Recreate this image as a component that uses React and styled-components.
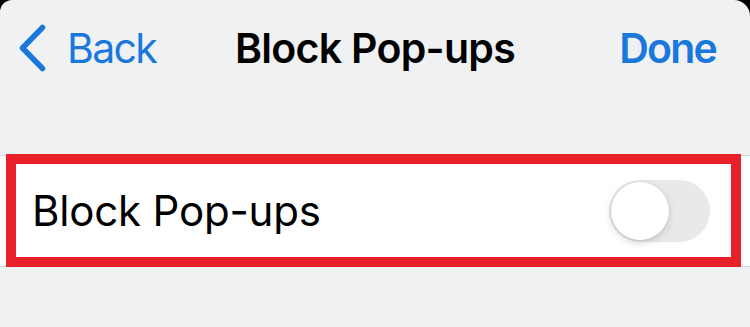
import styled, { createGlobalStyle } from "styled-components";

const GlobalStyle = createGlobalStyle`
  html, body {
    margin: 0;
    padding: 0;
    background: #000;
  }
  body {
    font-family: Inter, "Noto Sans", "Liberation Sans", sans-serif;
    -webkit-font-smoothing: antialiased;
  }
`;

const StyledSheet = styled.div`
  display: flex;
  flex-direction: column;
  height: 327px;
  background: #eff1f3;
  border-top-left-radius: 12px;
  border-top-right-radius: 16px;
  overflow: hidden;
`;

const StyledHeader = styled.header`
  display: grid;
  grid-template-columns: 1fr auto 1fr;
  align-items: center;
  height: 96px;
  padding: 0 19px;
`;

const StyledBack = styled.button`
  display: flex;
  align-items: center;
  gap: 21px;
  justify-self: start;
  padding: 0;
  border: 0;
  background: none;
  color: #1a78dc;
  font: 400 41px/1 Inter, "Noto Sans", sans-serif;
  letter-spacing: -1.7px;
`;

const StyledTitle = styled.h1`
  margin: 0;
  color: #000;
  font: 600 41px/1 Inter, "Noto Sans", sans-serif;
  letter-spacing: -0.7px;
`;

const StyledDone = styled.button`
  justify-self: end;
  margin-right: 15px;
  padding: 0;
  border: 0;
  background: none;
  color: #1a78dc;
  font: 600 41px/1 Inter, "Noto Sans", sans-serif;
  letter-spacing: -1.8px;
`;

const StyledRow = styled.div`
  display: flex;
  height: 110px;
  margin-top: 59px;
  padding: 0 9px 0 6px;
  background: #fff;
  border-top: 1px solid #d4d6d9;
  border-bottom: 1px solid #d4d6d9;
`;

const StyledHighlight = styled.div`
  flex: 1;
  display: flex;
  align-items: center;
  justify-content: space-between;
  box-sizing: border-box;
  margin: -2px 0 -1px;
  padding: 0 21px 0 16px;
  border: 10px solid #e8202a;
`;

const StyledLabel = styled.span`
  color: #000;
  font: 400 42px/1 Inter, "Noto Sans", sans-serif;
  letter-spacing: -0.2px;
`;

const StyledSwitch = styled.div`
  position: relative;
  width: 101px;
  height: 62px;
  border-radius: 31px;
  background: #e9e9eb;
`;

const StyledKnob = styled.span`
  position: absolute;
  top: 2px;
  left: ${({ $on }) => ($on ? "41px" : "2px")};
  width: 58px;
  height: 58px;
  border-radius: 50%;
  background: #fff;
  box-shadow: 0 3px 8px rgba(0, 0, 0, 0.15), 0 0 0 1px rgba(0, 0, 0, 0.04);
`;

const Chevron = () => (
  <svg width="27" height="48" viewBox="0 0 27 48" fill="none">
    <path
      d="M23.5 3.5 L3.5 24 L23.5 44.5"
      stroke="#1a78dc"
      strokeWidth="5.5"
      strokeLinecap="round"
      strokeLinejoin="round"
    />
  </svg>
);

const App = () => {
  return (
    <>
      <GlobalStyle />
      <StyledSheet>
        <StyledHeader>
          <StyledBack>
            <Chevron />
            Back
          </StyledBack>
          <StyledTitle>Block Pop-ups</StyledTitle>
          <StyledDone>Done</StyledDone>
        </StyledHeader>
        <StyledRow>
          <StyledHighlight>
            <StyledLabel>Block Pop-ups</StyledLabel>
            <StyledSwitch>
              <StyledKnob $on={false} />
            </StyledSwitch>
          </StyledHighlight>
        </StyledRow>
      </StyledSheet>
    </>
  );
};

export default App;
